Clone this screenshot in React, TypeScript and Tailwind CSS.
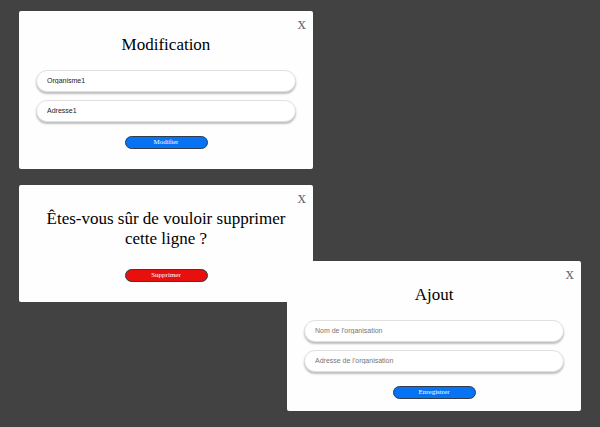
import type { ReactNode } from "react";

type DialogProps = {
  title: string;
  className: string;
  children: ReactNode;
};

function Dialog({ title, className, children }: DialogProps) {
  return (
    <section
      role="dialog"
      aria-label={title}
      className={`relative flex w-full max-w-[294px] flex-col items-center rounded-xs bg-[#fefefe] px-[17px] pt-6 ${className}`}
    >
      <button
        type="button"
        aria-label="Fermer"
        className="absolute top-[3px] right-[7px] cursor-pointer text-[17px] leading-5 text-[#6b6b6b]"
      >
        x
      </button>
      <h2 className="text-center text-[17px] leading-5 text-black">{title}</h2>
      {children}
    </section>
  );
}

type FieldProps = { label: string; value?: string; placeholder?: string };

function Field({ label, value, placeholder }: FieldProps) {
  return (
    <input
      type="text"
      aria-label={label}
      defaultValue={value}
      placeholder={placeholder}
      className="h-[22px] w-full rounded-full border border-[#e0e0e0] bg-white px-[10px] pb-[2px] font-['Liberation_Sans',Arial,sans-serif] text-[7px] leading-4 text-[#222222] shadow-[0_2px_2px_rgba(0,0,0,0.25)] outline-none placeholder:text-[#757575]"
    />
  );
}

function Action({ children, color }: { children: string; color: string }) {
  return (
    <button
      type="submit"
      className={`flex h-[13px] w-[83px] cursor-pointer items-center justify-center rounded-full border border-[#333c48] text-[7px] leading-none text-white ${color}`}
    >
      {children}
    </button>
  );
}

type FormProps = { fields: FieldProps[]; action: string };

function OrganisationForm({ fields, action }: FormProps) {
  return (
    <form
      onSubmit={(event) => event.preventDefault()}
      className="mt-[15px] flex w-full flex-col items-center"
    >
      <div className="mb-[14px] flex w-full flex-col gap-2">
        {fields.map((field) => (
          <Field key={field.label} {...field} />
        ))}
      </div>
      <Action color="bg-[#0673f5]">{action}</Action>
    </form>
  );
}

export default function App() {
  return (
    <main className="flex min-h-screen flex-col items-start bg-[#424242] px-[19px] pt-[11px] pb-4 font-['Liberation_Serif','Times_New_Roman',serif]">
      <Dialog title="Modification" className="pb-5">
        <OrganisationForm
          fields={[
            { label: "Organisme", value: "Organisme1" },
            { label: "Adresse", value: "Adresse1" },
          ]}
          action="Modifier"
        />
      </Dialog>

      <Dialog
        title="Êtes-vous sûr de vouloir supprimer cette ligne ?"
        className="mt-4 pb-5"
      >
        <div className="mt-5">
          <Action color="bg-[#e80f0f]">Supprimer</Action>
        </div>
      </Dialog>

      <Dialog title="Ajout" className="-mt-[41px] self-end pb-3">
        <OrganisationForm
          fields={[
            { label: "Organisation", placeholder: "Nom de l'organisation" },
            { label: "Adresse", placeholder: "Adresse de l'organisation" },
          ]}
          action="Enregistrer"
        />
      </Dialog>
    </main>
  );
}
